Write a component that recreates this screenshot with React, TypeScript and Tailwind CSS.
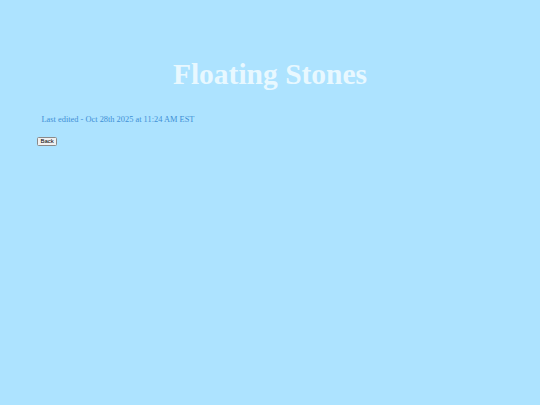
export default function App() {
  return (
    <div
      className="min-h-screen bg-[#ade3ff] px-[37px] pt-[57px]"
      style={{ fontFamily: '"Liberation Serif", "Times New Roman", serif' }}
    >
      <h1 className="text-center text-[29.5px] font-bold leading-[34px] text-[#e8f8ff]">
        Floating Stones
      </h1>

      <p className="mt-[24px] pl-[4.5px] text-[8.4px] leading-[10px] text-[#3f8fd6]">
        Last edited - Oct 28th 2025 at 11:24 AM EST
      </p>

      <div className="mt-[1px]">
        <button
          className="h-[9px] rounded-[1.5px] border border-[#8a8a8a] bg-[#f0f0f0] px-[2.5px] text-[6px] leading-[7px] text-black"
          style={{ fontFamily: '"Liberation Sans", Arial, sans-serif' }}
        >
          Back
        </button>
      </div>
    </div>
  );
}
